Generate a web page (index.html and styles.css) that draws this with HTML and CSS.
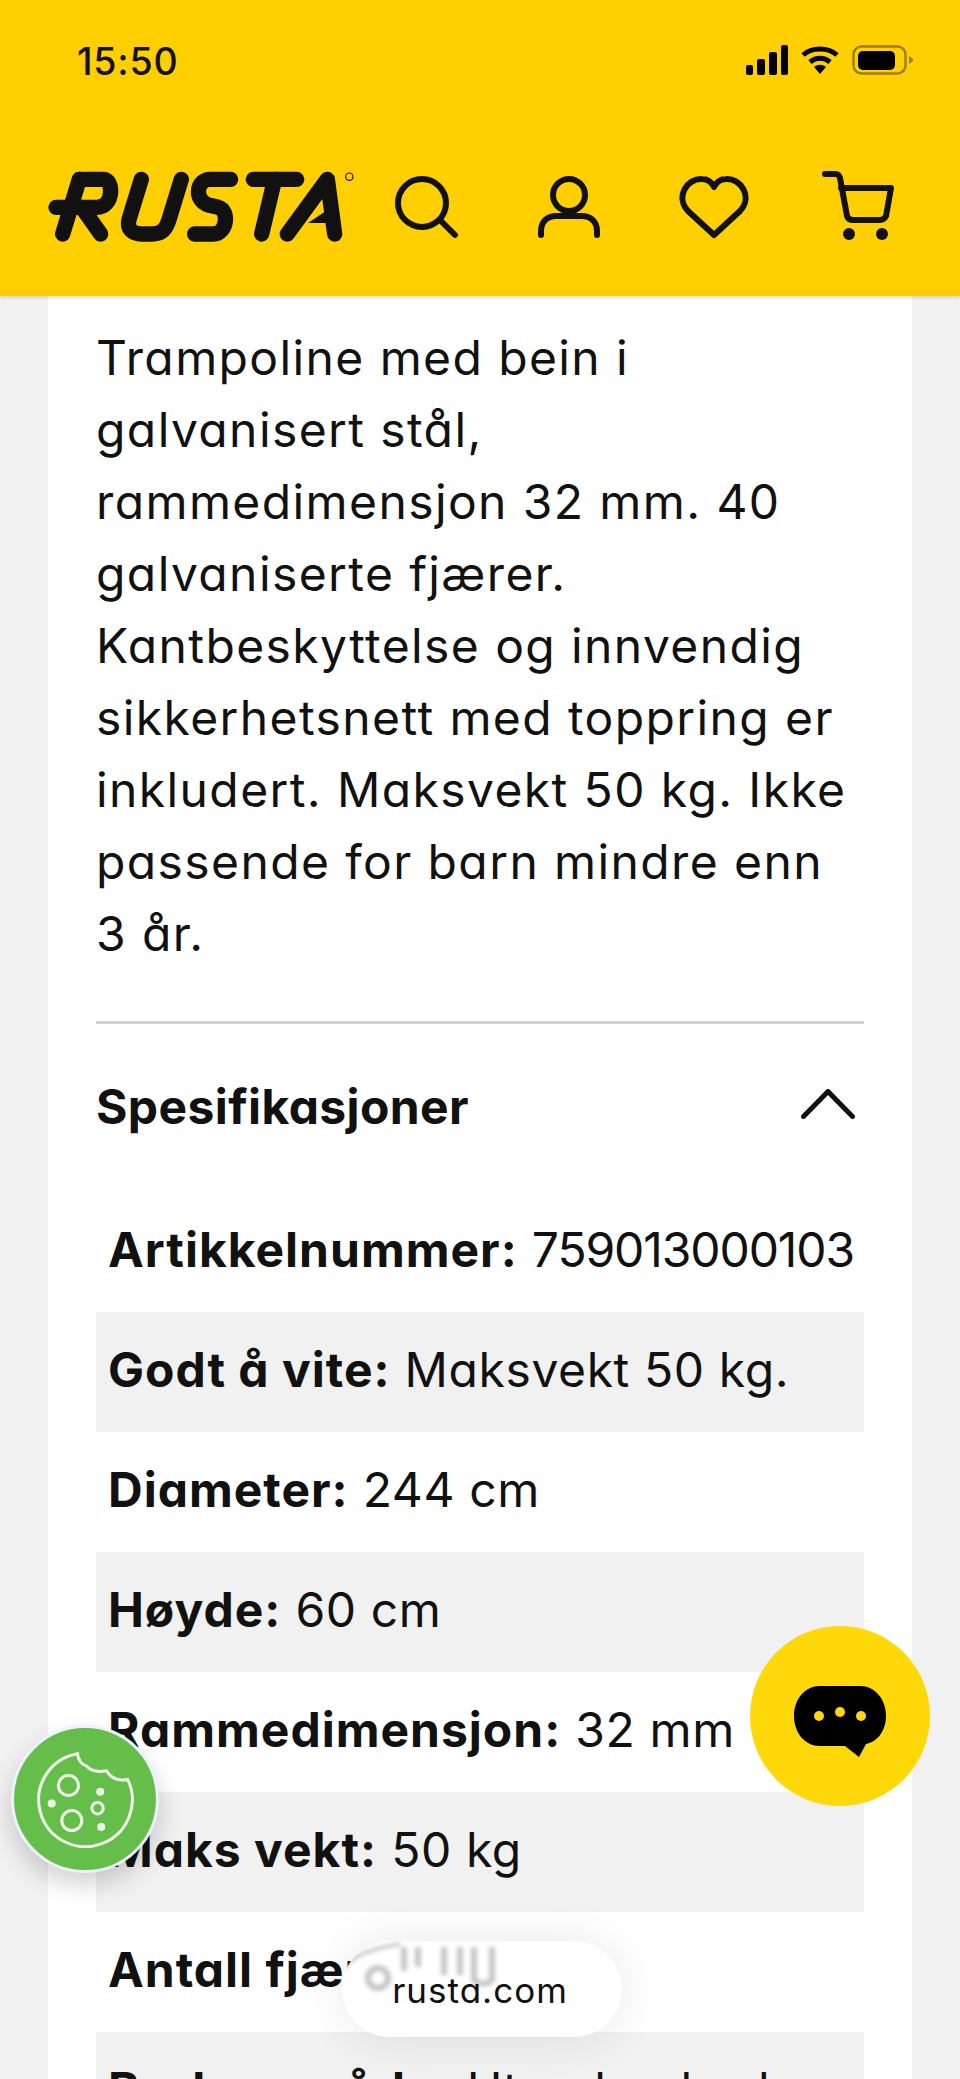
FILE: index.html
```html
<!DOCTYPE html>
<html lang="no">

<head>
    <meta charset="utf-8">
    <meta name="viewport" content="width=device-width, initial-scale=1.0">
    <title>Rusta</title>
    <link rel="stylesheet" href="styles.css">
</head>

<body>
    <header class="topp">
        <div class="status">
            <span class="klokke">15:50</span>
            <div class="status-ikoner">
                <svg width="42" height="30" viewBox="0 0 42 30"><rect x="0" y="20" width="7" height="10" rx="2"/><rect x="11" y="14" width="8" height="16" rx="2"/><rect x="23" y="7" width="8" height="23" rx="2"/><rect x="35" y="0" width="7" height="30" rx="2"/></svg>
                <svg width="40" height="30" viewBox="0 0 40 30"><path d="M3 10 C12 2 28 2 37 10" class="wifi"/><path d="M10 17 C16 12 24 12 30 17" class="wifi"/><path d="M14 22 L20 29 L26 22 C22 19 18 19 14 22Z"/></svg>
                <svg width="62" height="30" viewBox="0 0 62 30"><rect x="1.5" y="1.5" width="52" height="27" rx="8" class="batteri-kant"/><rect x="6" y="6" width="37" height="19" rx="5"/><path d="M57 11 L61 14 V16 L57 19Z" class="batteri-nub"/></svg>
            </div>
        </div>
        <nav class="meny">
            <svg class="logo" width="310" height="75" viewBox="24 60 930 225" role="img" aria-label="Rusta">
                <g class="logo-streker">
                    <path d="M118 88 L68 252"/>
                    <path d="M118 88 H190 C222 88 222 172 170 172 H48"/>
                    <path d="M128 176 L182 252"/>
                    <path d="M304 88 L268 205 C258 240 280 252 310 252 H335 C365 252 378 240 388 205 L424 88"/>
                    <path d="M572 88 H510 C470 88 460 150 505 165 L535 172 C570 182 560 252 520 252 H464"/>
                    <path d="M640 88 H770"/>
                    <path d="M704 88 L665 252"/>
                    <path d="M742 252 L862 88 L884 252"/>
                </g>
                <path d="M804 219 L866 178 L872 219Z" class="logo-kile"/>
                <circle cx="928" cy="80" r="11" class="logo-r"/>
            </svg>
            <svg class="ikon" width="64" height="64" viewBox="0 0 64 64"><circle cx="27" cy="28" r="24"/><path d="M45 45 L60 60"/></svg>
            <svg class="ikon" width="66" height="64" viewBox="0 0 66 64"><circle cx="33" cy="20" r="16"/><path d="M5 60 V56 C5 46 12 41 20 41 H46 C54 41 61 46 61 56 V60"/></svg>
            <svg class="ikon" width="70" height="64" viewBox="0 0 70 64"><path d="M35 60 L9 36 C-4 22 8 3 23 4 C29 4 33 8 35 12 C37 8 41 4 47 4 C62 3 74 22 61 36Z"/></svg>
            <svg class="ikon ikon-kurv" width="72" height="72" viewBox="0 0 72 72"><path d="M3 3 H14 C16 3 17 4 18 7 L25 45 C26 48 28 49 31 49 H58 C61 49 63 47 64 45 L69 17 H19"/><circle cx="27" cy="63" r="6" class="fylt"/><circle cx="60" cy="63" r="6" class="fylt"/></svg>
        </nav>
    </header>

    <main class="kort">
        <p class="beskrivelse">Trampoline med bein i galvanisert stål, rammedimensjon 32 mm. 40 galvaniserte fjærer. Kantbeskyttelse og innvendig sikkerhetsnett med toppring er inkludert. Maksvekt 50 kg. Ikke passende for barn mindre enn 3 år.</p>

        <div class="spek-topp">
            <h2>Spesifikasjoner</h2>
            <svg width="54" height="30" viewBox="0 0 54 30"><path d="M2.5 27.5 L27 2.5 L51.5 27.5"/></svg>
        </div>

        <ul class="spek">
            <li><b>Artikkelnummer:</b> <span class="artnr">759013000103</span></li>
            <li><b>Godt å vite:</b> Maksvekt 50 kg.</li>
            <li><b>Diameter:</b> 244 cm</li>
            <li><b>Høyde:</b> 60 cm</li>
            <li><b>Rammedimensjon:</b> 32 mm</li>
            <li><b>Maks vekt:</b> 50 kg</li>
            <li><b>Antall fjærer:</b> 40</li>
            <li><b>Bruksområde:</b> Utendørsbruk</li>
        </ul>
    </main>

    <button class="chat">
        <svg width="92" height="72" viewBox="0 0 92 72"><path d="M26 0 H66 C81 0 92 13 92 30 C92 45 83 56 72 58 L65 71 L51 60 H26 C11 60 0 47 0 30 C0 13 11 0 26 0Z"/><circle cx="25" cy="30" r="5" class="prikk"/><circle cx="46" cy="26" r="5" class="prikk"/><circle cx="67" cy="30" r="5" class="prikk"/></svg>
    </button>

    <button class="cookie">
        <svg width="102" height="97" viewBox="105 125 305 290"><path d="M235 133 A140 140 0 1 0 385 210 Q342 218 322 184 Q282 192 262 170 Q238 162 235 133Z"/><circle cx="208" cy="228" r="30"/><circle cx="218" cy="333" r="30"/><circle cx="295" cy="296" r="17"/><circle cx="303" cy="247" r="12" class="fylt"/><circle cx="158" cy="282" r="12" class="fylt"/><circle cx="306" cy="352" r="12" class="fylt"/></svg>
    </button>

    <div class="adresse">
        <svg class="glass" width="280" height="96" viewBox="0 0 280 96">
            <path d="M3 28 C8 18 18 10 58 3" class="glass-kant"/>
            <circle cx="36" cy="37" r="10"/>
            <path d="M62 6 V30 M76 6 V26 M102 6 V34 M118 6 V34 M132 6 V38 C132 44 150 44 150 38 V6"/>
        </svg>
        <span>rusta.com</span>
    </div>
</body>

</html>
```

FILE: styles.css
```css
* {
    margin: 0;
    padding: 0;
    box-sizing: border-box;
}

html,
body {
    height: 2079px;
    overflow: hidden;
}

body {
    background: #F1F1F1;
    color: #111;
    font-family: 'Inter', 'Liberation Sans', sans-serif;
    font-feature-settings: 'cv11' 1;
    position: relative;
}

.topp {
    height: 296px;
    background: #FFCF00;
    box-shadow: 0 2px 3px rgba(0, 0, 0, 0.12);
    position: relative;
}

.status {
    display: flex;
    justify-content: space-between;
    align-items: center;
    height: 122px;
    padding: 0 46px 0 77px;
}

.klokke {
    font-size: 37.5px;
    font-weight: 500;
    letter-spacing: 0.8px;
}

.status-ikoner {
    display: flex;
    align-items: center;
    gap: 12px;
    margin-top: -2px;
}

.wifi {
    fill: none;
    stroke: #000;
    stroke-width: 5px;
}

.batteri-kant {
    fill: none;
    stroke: #9A7F10;
    stroke-width: 2.5px;
}

.batteri-nub {
    fill: #9A7F10;
}

.meny {
    display: flex;
    align-items: center;
    gap: 77px;
    height: 170px;
    padding-left: 48px;
}

.logo {
    margin-right: -40px;
}

.logo-streker path {
    fill: none;
    stroke: #111;
    stroke-width: 46px;
    stroke-linecap: round;
    stroke-linejoin: round;
}

.logo-kile {
    fill: #111;
}

.logo-r {
    fill: none;
    stroke: #111;
    stroke-width: 3.5px;
}

.ikon {
    fill: none;
    stroke: #111;
    stroke-width: 6px;
    stroke-linecap: round;
    stroke-linejoin: round;
}

.ikon .fylt {
    fill: #111;
    stroke: none;
}

.ikon-kurv {
    margin-left: -4px;
}

.kort {
    width: 864px;
    margin: 0 auto;
    background: #fff;
    padding: 26px 48px 0;
}

.beskrivelse {
    font-size: 48px;
    line-height: 72px;
    letter-spacing: 1.4px;
    padding-bottom: 51px;
    border-bottom: 3px solid #D2D2D2;
}

.spek-topp {
    display: flex;
    justify-content: space-between;
    align-items: center;
    height: 168px;
    padding: 0 9px 8px 0;
}

.spek-topp h2 {
    font-size: 48px;
    font-weight: 700;
    letter-spacing: 0.4px;
    margin-top: 4px;
}

.spek-topp path {
    fill: none;
    stroke: #111;
    stroke-width: 5px;
    stroke-linecap: round;
    stroke-linejoin: round;
}

.spek {
    list-style: none;
}

.spek li {
    height: 120px;
    line-height: 115px;
    padding-left: 12px;
    font-size: 48px;
    letter-spacing: 0.6px;
    white-space: nowrap;
}

.spek li:nth-child(even) {
    background: #F1F1F1;
}

.spek b {
    font-weight: 700;
    letter-spacing: 1px;
}

.spek .artnr {
    letter-spacing: -1.1px;
}

.chat {
    position: absolute;
    left: 750px;
    top: 1626px;
    width: 180px;
    height: 180px;
    border: 0;
    border-radius: 50%;
    background: #FFD80A;
    display: flex;
    align-items: center;
    justify-content: center;
}

.chat svg {
    margin-top: 11px;
}

.prikk {
    fill: #FFD80A;
}

.cookie {
    position: absolute;
    left: 11px;
    top: 1725px;
    width: 148px;
    height: 148px;
    border: 3px solid #EEF3FB;
    border-radius: 50%;
    background: #65BD4A;
    box-shadow: 0 12px 24px rgba(0, 0, 0, 0.18);
    display: flex;
    align-items: center;
    justify-content: center;
}

.cookie svg {
    fill: none;
    stroke: #EFF8E8;
    stroke-width: 9px;
}

.cookie .fylt {
    fill: #EFF8E8;
    stroke: none;
}

.adresse {
    position: absolute;
    left: 342px;
    top: 1941px;
    width: 280px;
    height: 96px;
    border-radius: 48px;
    background: #fff;
    box-shadow: 0 0 50px rgba(0, 0, 0, 0.09);
    overflow: hidden;
    display: flex;
    justify-content: center;
    align-items: center;
}

.adresse span {
    font-size: 35px;
    letter-spacing: 1px;
    position: relative;
    top: 1px;
    left: -2px;
}

.glass {
    position: absolute;
    left: 0;
    top: 0;
    filter: blur(2px);
    fill: none;
    stroke: #C4C4C4;
    stroke-width: 6px;
}

.glass-kant {
    stroke: #BEBEBE;
    stroke-width: 3px;
}
```
